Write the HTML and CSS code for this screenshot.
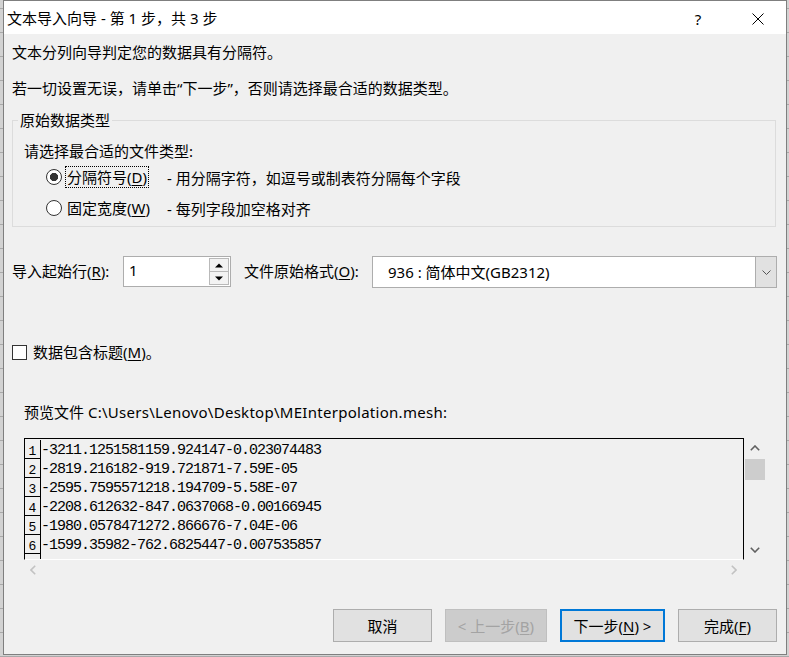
FILE: index.html
```html
<!DOCTYPE html>
<html lang="zh-CN">
<head>
<meta charset="utf-8">
<title>文本导入向导</title>
<link rel="stylesheet" href="styles.css">
</head>
<body>
<div class="window">
  <div class="titlebar">
    <span class="title">文本导入向导 - 第 1 步，共 3 步</span>
    <span class="tb-help">?</span>
    <span class="tb-close"><svg width="12" height="12" viewBox="0 0 12 12"><path d="M0.5 0.5 L11.5 11.5 M11.5 0.5 L0.5 11.5" stroke="#000" stroke-width="1" fill="none"/></svg></span>
  </div>
  <div class="content">
    <p class="line l1">文本分列向导判定您的数据具有分隔符。</p>
    <p class="line l2">若一切设置无误，请单击“下一步”，否则请选择最合适的数据类型。</p>
    <fieldset class="group">
      <legend>原始数据类型</legend>
      <div class="prompt">请选择最合适的文件类型:</div>
      <div class="radio-row r1">
        <span class="radio checked"></span>
        <span class="opt"><span class="radio-label focus">分隔符号(<u>D</u>)</span></span>
        <span class="desc">- 用分隔字符，如逗号或制表符分隔每个字段</span>
      </div>
      <div class="radio-row r2">
        <span class="radio"></span>
        <span class="opt"><span class="radio-label">固定宽度(<u>W</u>)</span></span>
        <span class="desc">- 每列字段加空格对齐</span>
      </div>
    </fieldset>
    <div class="import-row">
      <span class="import-label">导入起始行(<u>R</u>):</span>
      <div class="spin">
        <span class="spin-val">1</span>
        <div class="spin-btns">
          <span class="spin-btn up"><svg width="8" height="5" viewBox="0 0 8 5"><path d="M0 4.5 L4 0.5 L8 4.5 Z" fill="#000"/></svg></span>
          <span class="spin-btn down"><svg width="8" height="5" viewBox="0 0 8 5"><path d="M0 0.5 L4 4.5 L8 0.5 Z" fill="#000"/></svg></span>
        </div>
      </div>
      <span class="fmt-label">文件原始格式(<u>O</u>):</span>
      <div class="select">
        <span class="select-val">936 : 简体中文(GB2312)</span>
        <span class="select-btn"><svg width="9" height="5" viewBox="0 0 9 5"><path d="M0.5 0.5 L4.5 4.5 L8.5 0.5" stroke="#555" stroke-width="1" fill="none"/></svg></span>
      </div>
    </div>
    <div class="check-row">
      <span class="checkbox"></span>
      <span class="check-label">数据包含标题(<u>M</u>)。</span>
    </div>
    <div class="preview-label">预览文件 <span class="path">C:\Users\Lenovo\Desktop\MEInterpolation.mesh:</span></div>
    <div class="preview">
      <div class="pv-box">
        <div class="pv-row"><span class="pv-num">1</span><span class="pv-data">-3211.1251581159.924147-0.023074483</span></div>
        <div class="pv-row"><span class="pv-num">2</span><span class="pv-data">-2819.216182-919.721871-7.59E-05</span></div>
        <div class="pv-row"><span class="pv-num">3</span><span class="pv-data">-2595.7595571218.194709-5.58E-07</span></div>
        <div class="pv-row"><span class="pv-num">4</span><span class="pv-data">-2208.612632-847.0637068-0.00166945</span></div>
        <div class="pv-row"><span class="pv-num">5</span><span class="pv-data">-1980.0578471272.866676-7.04E-06</span></div>
        <div class="pv-row"><span class="pv-num">6</span><span class="pv-data">-1599.35982-762.6825447-0.007535857</span></div>
        <div class="pv-row"><span class="pv-num"></span><span class="pv-data"></span></div>
      </div>
      <div class="vscroll">
        <span class="sb-btn"><svg width="10" height="6" viewBox="0 0 10 6"><path d="M0.8 5.2 L5 1 L9.2 5.2" stroke="#606060" stroke-width="1.6" fill="none"/></svg></span>
        <span class="thumb"></span>
        <span class="sb-space"></span>
        <span class="sb-btn"><svg width="10" height="6" viewBox="0 0 10 6"><path d="M0.8 0.8 L5 5 L9.2 0.8" stroke="#606060" stroke-width="1.6" fill="none"/></svg></span>
      </div>
      <div class="hscroll">
        <span class="hs-btn"><svg width="6" height="10" viewBox="0 0 6 10"><path d="M5.2 0.8 L1 5 L5.2 9.2" stroke="#c2c2c2" stroke-width="1.6" fill="none"/></svg></span>
        <span class="hs-btn"><svg width="6" height="10" viewBox="0 0 6 10"><path d="M0.8 0.8 L5 5 L0.8 9.2" stroke="#c2c2c2" stroke-width="1.6" fill="none"/></svg></span>
      </div>
    </div>
    <div class="buttons">
      <span class="btn cancel">取消</span>
      <span class="btn back disabled">&lt; 上一步(<u>B</u>)</span>
      <span class="btn next default">下一步(<u>N</u>) &gt;</span>
      <span class="btn finish">完成(<u>F</u>)</span>
    </div>
  </div>
</div>
</body>
</html>
```

FILE: styles.css
```css
html, body {
  margin: 0;
  padding: 0;
}
body {
  width: 789px;
  height: 657px;
  overflow: hidden;
  background-color: #d2d2d2;
  background-image: repeating-linear-gradient(to bottom, transparent 0, transparent 8px, #a9a9a9 8px, #a9a9a9 9px, transparent 9px, transparent 24px);
  font-family: "Noto Sans", "Noto Sans CJK SC", sans-serif;
  font-size: 15px;
  color: #000;
}
u {
  text-decoration: underline;
  text-underline-offset: 2px;
}
.window {
  box-sizing: border-box;
  margin-left: 3px;
  width: 784px;
  height: 655px;
  border: 1px solid #7f7f7f;
  background: #f0f0f0;
  display: flex;
  flex-direction: column;
}
.titlebar {
  height: 33px;
  background: #fff;
  display: flex;
  align-items: center;
  padding-left: 3px;
  flex: none;
}
.title {
  flex: 1;
  line-height: 33px;
  padding-top: 2px;
}
.tb-help {
  width: 64px;
  height: 33px;
  display: flex;
  align-items: center;
  justify-content: center;
  padding-top: 2px;
  box-sizing: border-box;
}
.tb-close {
  width: 56px;
  height: 33px;
  display: flex;
  align-items: center;
  justify-content: center;
  padding-top: 2px;
  box-sizing: border-box;
}
.content {
  flex: 1;
  display: flex;
  flex-direction: column;
  padding: 0 8px 0 8px;
}
.line {
  margin: 0;
  line-height: 20px;
}
.l1 { margin-top: 8px; }
.l2 { margin-top: 16px; }
.group {
  margin: 12px 2px 0 0;
  padding: 0 0 7px 11px;
  border: 1px solid #dcdcdc;
  min-width: 0;
}
.group legend {
  padding: 0 2px;
  margin-left: -6px;
  line-height: 20px;
}
.prompt {
  margin-top: 11px;
  line-height: 20px;
}
.radio-row {
  display: flex;
  align-items: center;
  height: 22px;
  padding-left: 22px;
}
.r1 { margin-top: 5px; }
.r2 { margin-top: 9px; }
.radio {
  box-sizing: border-box;
  width: 16px;
  height: 16px;
  border: 1px solid #333;
  border-radius: 50%;
  background: #fff;
  flex: none;
}
.radio.checked {
  background: radial-gradient(circle, #333 0, #333 3.8px, #fff 4.4px);
}
.opt {
  width: 102px;
  margin-left: 3px;
  display: flex;
  flex: none;
}
.radio-label {
  border: 1px dotted transparent;
  padding: 0 1px;
  line-height: 20px;
}
.radio-label.focus {
  border-color: #000;
}
.import-row {
  display: flex;
  align-items: flex-start;
  margin-top: 29px;
  height: 32px;
}
.import-label {
  width: 111px;
  line-height: 31px;
  flex: none;
}
.spin {
  box-sizing: border-box;
  width: 108px;
  height: 31px;
  border: 1px solid #adadad;
  background: #fff;
  display: flex;
  flex: none;
}
.spin-val {
  flex: 1;
  padding-left: 5px;
  line-height: 26px;
}
.spin-btns {
  width: 20px;
  display: flex;
  flex-direction: column;
  padding: 1px 1px 1px 0;
}
.spin-btn {
  flex: 1;
  box-sizing: border-box;
  border: 1px solid #b9b9b9;
  background: #f3f3f3;
  display: flex;
  align-items: center;
  justify-content: center;
}
.spin-btn.down {
  border-top: none;
}
.fmt-label {
  margin-left: 13px;
  width: 128px;
  line-height: 31px;
  flex: none;
}
.select {
  box-sizing: border-box;
  width: 405px;
  height: 32px;
  border: 1px solid #adadad;
  background: #fff;
  display: flex;
  flex: none;
}
.select-val {
  flex: 1;
  padding-left: 15px;
  line-height: 30px;
}
.select-btn {
  width: 20px;
  background: #e1e1e1;
  border-left: 1px solid #adadad;
  display: flex;
  align-items: center;
  justify-content: center;
}
.check-row {
  display: flex;
  align-items: center;
  margin-top: 54px;
  height: 20px;
}
.checkbox {
  box-sizing: border-box;
  width: 15px;
  height: 15px;
  border: 1px solid #333;
  background: #fff;
  flex: none;
}
.check-label {
  margin-left: 6px;
  line-height: 20px;
}
.preview-label {
  margin-top: 40px;
  padding-left: 12px;
  line-height: 20px;
}
.path {
  letter-spacing: 0.28px;
}
.preview {
  margin-top: 16px;
  margin-left: 12px;
  display: grid;
  grid-template-columns: 720px 22px;
  grid-template-rows: 122px 20px;
}
.pv-box {
  box-sizing: border-box;
  border: 1px solid #000;
  border-bottom-color: #fff;
  overflow: hidden;
  padding-top: 1px;
}
.pv-row {
  display: flex;
  height: 19px;
}
.pv-num {
  box-sizing: border-box;
  width: 16px;
  height: 19px;
  border-right: 1px solid #000;
  border-bottom: 1px solid #000;
  font-family: "Liberation Mono", monospace;
  font-size: 13px;
  line-height: 13px;
  display: flex;
  align-items: flex-end;
  justify-content: center;
  flex: none;
}
.pv-data {
  font-family: "Liberation Mono", monospace;
  font-size: 15px;
  letter-spacing: -1px;
  line-height: 19px;
  white-space: pre;
  padding-top: 1px;
}
.vscroll {
  display: flex;
  flex-direction: column;
  align-items: center;
}
.sb-btn {
  height: 20px;
  width: 22px;
  display: flex;
  align-items: center;
  justify-content: center;
  flex: none;
}
.thumb {
  width: 20px;
  height: 21px;
  margin-top: 1px;
  background: #cdcdcd;
  flex: none;
}
.sb-space {
  flex: 1;
}
.hscroll {
  display: flex;
  justify-content: space-between;
  align-items: center;
  padding: 0 7px 0 6px;
}
.hs-btn {
  width: 6px;
  display: flex;
  align-items: center;
}
.buttons {
  display: flex;
  justify-content: flex-end;
  gap: 13px;
  margin-top: 29px;
  margin-right: 1px;
}
.btn {
  box-sizing: border-box;
  height: 33px;
  border: 1px solid #adadad;
  background: #e1e1e1;
  display: flex;
  align-items: center;
  justify-content: center;
  line-height: 20px;
}
.cancel { width: 99px; }
.back { width: 102px; }
.next { width: 105px; }
.finish { width: 99px; }
.btn.disabled {
  background: #cccccc;
  border-color: #bfbfbf;
  color: #a3a3a3;
}
.btn.default {
  border: 2px solid #0078d7;
}
```
